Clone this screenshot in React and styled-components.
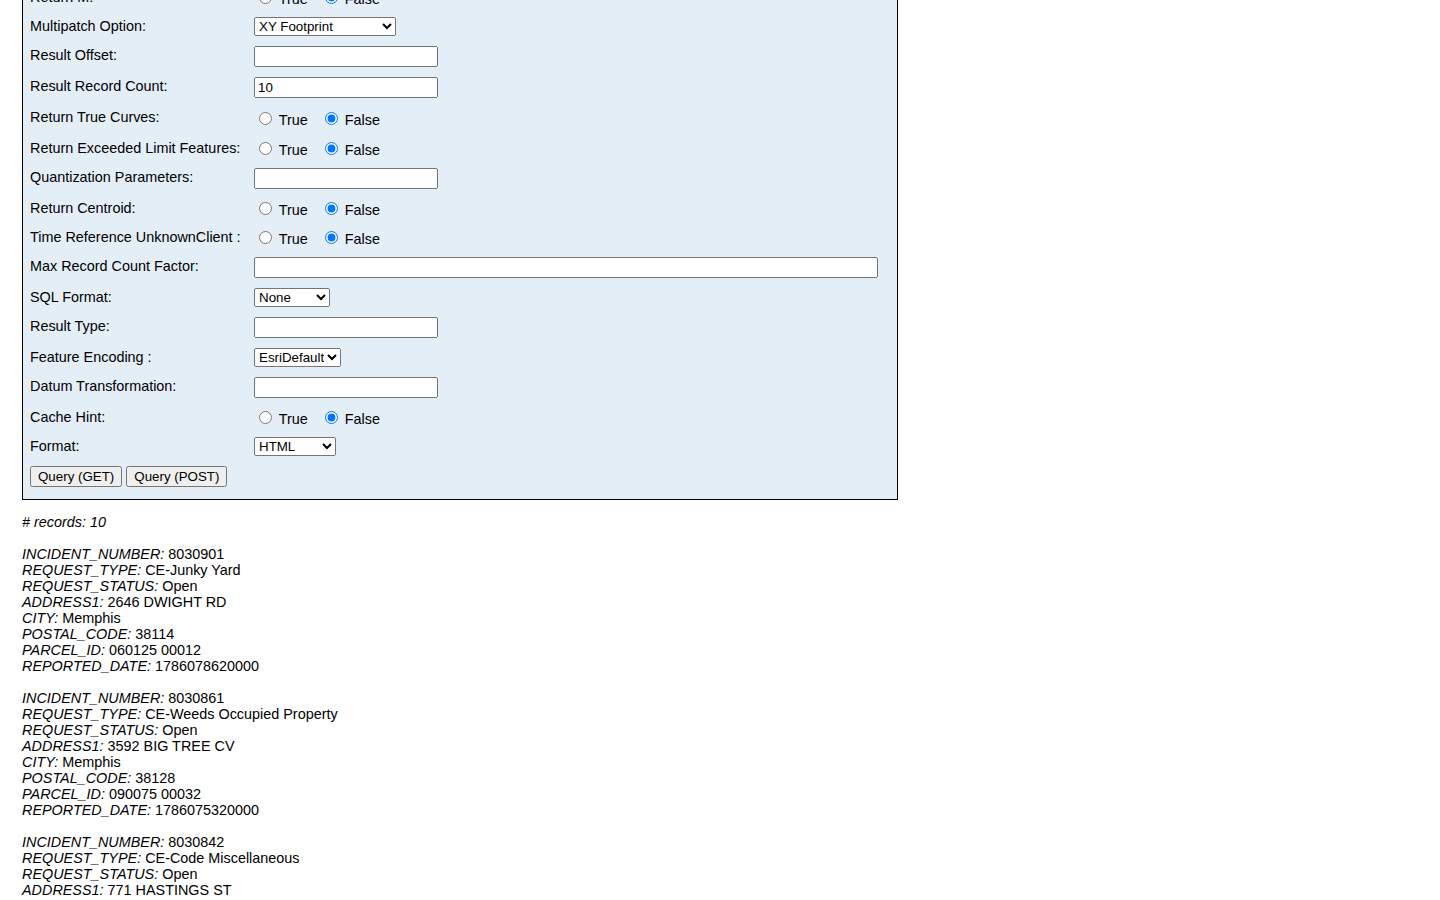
import styled, { createGlobalStyle } from 'styled-components';

const GlobalStyle = createGlobalStyle`
    body {
        margin: 0;
        background: #fff;
        color: #000;
        font-family: "Liberation Sans", Arial, sans-serif;
        font-size: 14.4px;
    }
`;

const Page = styled.div`
    padding: 0 22px;
`;

const FormTable = styled.table`
    width: 876px;
    margin-top: -19px;
    border: 1px solid #000;
    border-spacing: 2px;
    background: #e4eef7;
`;

const Label = styled.td`
    width: 212px;
    padding: 5px 5px 4px;
    vertical-align: top;
    white-space: nowrap;
`;

const Field = styled.td`
    padding: ${(p) => (p.$tall ? '5px 5px' : '4px 5px')};
    vertical-align: top;
`;

const ButtonCell = styled.td`
    padding: 4px 5px 10px;
`;

const TextInput = styled.input`
    box-sizing: border-box;
    width: ${(p) => (p.$wide ? '624px' : '184px')};
    font-family: "Liberation Sans", Arial, sans-serif;
    font-size: 13.33px;
    margin: 0;
`;

const Select = styled.select`
    width: ${(p) => p.$w}px;
    font-family: "Liberation Sans", Arial, sans-serif;
    font-size: 13.33px;
    margin: 0;
`;

const Radio = styled.input`
    margin: 3px 3px 0 5px;
`;

const Choice = styled.label`
    margin-right: 12px;
`;

const Button = styled.button`
    font-family: "Liberation Sans", Arial, sans-serif;
    font-size: 13.33px;
    margin: 0 4px 0 0;
`;

const Results = styled.div`
    margin-top: 14px;
    line-height: 16px;
`;

const Count = styled.p`
    margin: 0 0 16px;
    font-style: italic;
`;

const Record = styled.div`
    margin-bottom: 16px;
`;

const Key = styled.i``;

const BoolField = ({ name, tall }) => (
    <Field $tall={tall}>
        <Radio type="radio" name={name} id={`${name}-t`} />
        <Choice htmlFor={`${name}-t`}> True</Choice>
        <Radio type="radio" name={name} id={`${name}-f`} defaultChecked />
        <label htmlFor={`${name}-f`}> False</label>
    </Field>
);

const records = [
    {
        INCIDENT_NUMBER: '8030901',
        REQUEST_TYPE: 'CE-Junky Yard',
        REQUEST_STATUS: 'Open',
        ADDRESS1: '2646 DWIGHT RD',
        CITY: 'Memphis',
        POSTAL_CODE: '38114',
        PARCEL_ID: '060125 00012',
        REPORTED_DATE: '1786078620000',
    },
    {
        INCIDENT_NUMBER: '8030861',
        REQUEST_TYPE: 'CE-Weeds Occupied Property',
        REQUEST_STATUS: 'Open',
        ADDRESS1: '3592 BIG TREE CV',
        CITY: 'Memphis',
        POSTAL_CODE: '38128',
        PARCEL_ID: '090075 00032',
        REPORTED_DATE: '1786075320000',
    },
    {
        INCIDENT_NUMBER: '8030842',
        REQUEST_TYPE: 'CE-Code Miscellaneous',
        REQUEST_STATUS: 'Open',
        ADDRESS1: '771 HASTINGS ST',
    },
];

export default function App() {
    return (
        <Page>
            <GlobalStyle />
            <form onSubmit={(e) => e.preventDefault()}>
                <FormTable>
                    <tbody>
                        <tr>
                            <Label>Return M:</Label>
                            <BoolField name="returnM" />
                        </tr>
                        <tr>
                            <Label>Multipatch Option:</Label>
                            <Field>
                                <Select $w={142}>
                                    <option>XY Footprint</option>
                                    <option>Strip Texture</option>
                                    <option>Embed Material</option>
                                    <option>External Material</option>
                                </Select>
                            </Field>
                        </tr>
                        <tr>
                            <Label>Result Offset:</Label>
                            <Field><TextInput type="text" /></Field>
                        </tr>
                        <tr>
                            <Label>Result Record Count:</Label>
                            <Field><TextInput type="text" defaultValue="10" /></Field>
                        </tr>
                        <tr>
                            <Label>Return True Curves:</Label>
                            <BoolField name="returnTrueCurves" tall />
                        </tr>
                        <tr>
                            <Label>Return Exceeded Limit Features:</Label>
                            <BoolField name="returnExceededLimitFeatures" />
                        </tr>
                        <tr>
                            <Label>Quantization Parameters:</Label>
                            <Field><TextInput type="text" /></Field>
                        </tr>
                        <tr>
                            <Label>Return Centroid:</Label>
                            <BoolField name="returnCentroid" />
                        </tr>
                        <tr>
                            <Label>Time Reference UnknownClient :</Label>
                            <BoolField name="timeReferenceUnknownClient" />
                        </tr>
                        <tr>
                            <Label>Max Record Count Factor:</Label>
                            <Field><TextInput type="text" $wide /></Field>
                        </tr>
                        <tr>
                            <Label>SQL Format:</Label>
                            <Field>
                                <Select $w={76}>
                                    <option>None</option>
                                    <option>Standard</option>
                                    <option>Native</option>
                                </Select>
                            </Field>
                        </tr>
                        <tr>
                            <Label>Result Type:</Label>
                            <Field><TextInput type="text" /></Field>
                        </tr>
                        <tr>
                            <Label>Feature Encoding :</Label>
                            <Field>
                                <Select $w={87}>
                                    <option>EsriDefault</option>
                                    <option>Esri</option>
                                </Select>
                            </Field>
                        </tr>
                        <tr>
                            <Label>Datum Transformation:</Label>
                            <Field><TextInput type="text" /></Field>
                        </tr>
                        <tr>
                            <Label>Cache Hint:</Label>
                            <BoolField name="cacheHint" />
                        </tr>
                        <tr>
                            <Label>Format:</Label>
                            <Field>
                                <Select $w={82}>
                                    <option>HTML</option>
                                    <option>JSON</option>
                                    <option>GeoJSON</option>
                                    <option>PBF</option>
                                </Select>
                            </Field>
                        </tr>
                        <tr>
                            <ButtonCell colSpan={2}>
                                <Button type="submit">Query (GET)</Button>
                                <Button type="submit">Query (POST)</Button>
                            </ButtonCell>
                        </tr>
                    </tbody>
                </FormTable>
            </form>
            <Results>
                <Count># records: 10</Count>
                {records.map((rec) => (
                    <Record key={rec.INCIDENT_NUMBER}>
                        {Object.entries(rec).map(([k, v]) => (
                            <div key={k}>
                                <Key>{k}:</Key> {v}
                            </div>
                        ))}
                    </Record>
                ))}
            </Results>
        </Page>
    );
}
